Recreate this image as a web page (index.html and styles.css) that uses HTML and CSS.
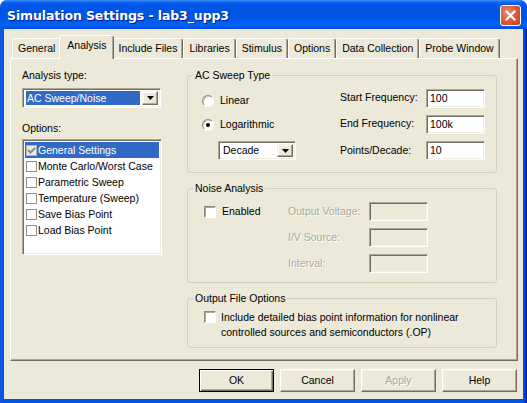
FILE: index.html
```html
<!DOCTYPE html>
<html>
<head>
<meta charset="utf-8">
<link rel="stylesheet" href="styles.css">
</head>
<body>
<div class="window">
  <div class="titlebar">
    <span class="title">Simulation Settings - lab3_upp3</span>
    <span class="close"><svg width="11" height="11" viewBox="0 0 11 11"><path d="M1.5 1.5 L9.5 9.5 M9.5 1.5 L1.5 9.5" stroke="#fff" stroke-width="2" stroke-linecap="square"/></svg></span>
  </div>
  <div class="client">
    <div class="tabs">
      <div class="tab">General</div>
      <div class="tab active">Analysis</div>
      <div class="tab">Include Files</div>
      <div class="tab">Libraries</div>
      <div class="tab">Stimulus</div>
      <div class="tab">Options</div>
      <div class="tab">Data Collection</div>
      <div class="tab">Probe Window</div>
    </div>
    <div class="panel">
      <div class="leftcol">
        <div class="lbl">Analysis type:</div>
        <div class="combo combo-wide">
          <span class="combo-text"><span class="hl">AC Sweep/Noise</span></span>
          <span class="dd"><svg width="7" height="4" viewBox="0 0 7 4"><path d="M0 0 H7 L3.5 4 Z" fill="#000"/></svg></span>
        </div>
        <div class="lbl opts">Options:</div>
        <div class="listbox">
          <div class="item selected"><span class="lcb lcb-dis"><svg width="9" height="9" viewBox="0 0 9 9"><path d="M1 4 L3.5 6.5 L8 2" stroke="#8d8d8d" stroke-width="2" fill="none"/></svg></span>General Settings</div>
          <div class="item"><span class="lcb"></span>Monte Carlo/Worst Case</div>
          <div class="item"><span class="lcb"></span>Parametric Sweep</div>
          <div class="item"><span class="lcb"></span>Temperature (Sweep)</div>
          <div class="item"><span class="lcb"></span>Save Bias Point</div>
          <div class="item"><span class="lcb"></span>Load Bias Point</div>
        </div>
      </div>
      <div class="rightcol">
        <fieldset class="group group-ac">
          <legend>AC Sweep Type</legend>
          <div class="acgrid">
            <div class="radio radio-first"><span class="rb"></span>Linear</div>
            <span class="flabel">Start Frequency:</span>
            <span class="tb">100</span>
            <div class="radio"><span class="rb rb-on"></span>Logarithmic</div>
            <span class="flabel">End Frequency:</span>
            <span class="tb">100k</span>
            <div class="combo combo-small">
              <span class="combo-text plain">Decade</span>
              <span class="dd"><svg width="7" height="4" viewBox="0 0 7 4"><path d="M0 0 H7 L3.5 4 Z" fill="#000"/></svg></span>
            </div>
            <span class="flabel">Points/Decade:</span>
            <span class="tb">10</span>
          </div>
        </fieldset>
        <fieldset class="group group-noise">
          <legend>Noise Analysis</legend>
          <div class="noisegrid">
            <div class="check"><span class="cb"></span>Enabled</div>
            <span class="flabel dis">Output Voltage:</span>
            <span class="tb tb-dis"></span>
            <span></span>
            <span class="flabel dis">I/V Source:</span>
            <span class="tb tb-dis"></span>
            <span></span>
            <span class="flabel dis">Interval:</span>
            <span class="tb tb-dis"></span>
          </div>
        </fieldset>
        <fieldset class="group group-out">
          <legend>Output File Options</legend>
          <div class="outrow">
            <span class="cb"></span>
            <span class="outtext">Include detailed bias point information for nonlinear<br>controlled sources and semiconductors (.OP)</span>
          </div>
        </fieldset>
      </div>
    </div>
    <div class="buttons">
      <div class="btn btn-default">OK</div>
      <div class="btn">Cancel</div>
      <div class="btn btn-dis">Apply</div>
      <div class="btn">Help</div>
    </div>
  </div>
</div>
</body>
</html>
```

FILE: styles.css
```css
html, body {
  margin: 0;
  padding: 0;
  background: #ffffff;
}
body {
  width: 527px;
  height: 403px;
  font-family: "Liberation Sans", Arial, sans-serif;
  font-size: 10.5px;
  line-height: 13px;
  color: #000;
  overflow: hidden;
}
.window {
  width: 527px;
  height: 403px;
  box-sizing: border-box;
  background: linear-gradient(to right, #0831d9 0, #166aee 1px, #0055e5 2px, #0055e5 523px, #0046d4 525px, #00138c 527px);
  border-radius: 7px 7px 0 0;
  display: flex;
  flex-direction: column;
  overflow: hidden;
}
.titlebar {
  height: 29px;
  flex: none;
  display: flex;
  align-items: center;
  justify-content: space-between;
  padding: 0 6px 0 7px;
  background: linear-gradient(to bottom, #3d8ff5 0, #1468f0 2px, #0058ee 4px, #0054e3 10px, #0055e6 18px, #0162f4 25px, #0058ec 27px, #0048d6 29px);
  border-radius: 7px 7px 0 0;
}
.title {
  color: #fff;
  font-family: "DejaVu Sans", "Liberation Sans", sans-serif;
  font-weight: bold;
  font-size: 12.5px;
  letter-spacing: -0.1px;
  text-shadow: 1px 1px #0a1e8c;
  padding-top: 1px;
}
.close {
  width: 19px;
  height: 19px;
  border: 1px solid #fff;
  border-radius: 3px;
  background: radial-gradient(circle at 35% 35%, #e98e76 0, #db5a3a 50%, #c3411f 100%);
  display: flex;
  align-items: center;
  justify-content: center;
  margin-top: 1px;
}
.client {
  flex: 1;
  margin: 0 4px 4px 4px;
  background: #ece9d8;
  padding: 6px 5px 0 6px;
  display: flex;
  flex-direction: column;
}
.tabs {
  height: 23px;
  display: flex;
  align-items: flex-end;
  padding-left: 2px;
  position: relative;
  z-index: 2;
}
.tab {
  height: 20px;
  box-sizing: border-box;
  padding: 3px 5px 0 5px;
  border-top: 1px solid #fff;
  border-left: 1px solid #fff;
  border-right: 1px solid #716f64;
  border-radius: 3px 3px 0 0;
  box-shadow: inset -1px 0 #aca899;
  white-space: nowrap;
}
.tab.active {
  height: 24px;
  margin: 0 -2px -1px -2px;
  padding: 3px 7px 0 7px;
  background: #ece9d8;
  position: relative;
  z-index: 3;
}
.panel {
  height: 303px;
  box-sizing: border-box;
  border: 1px solid;
  border-color: #fff #716f64 #716f64 #fff;
  box-shadow: inset -1px -1px #aca899;
  display: flex;
  padding: 10px 0 0 11px;
  position: relative;
  z-index: 1;
}
.leftcol {
  width: 139px;
  display: flex;
  flex-direction: column;
}
.lbl {
  height: 13px;
}
.lbl.opts {
  margin-top: 14px;
}
.combo {
  box-sizing: border-box;
  display: flex;
  background: #fff;
  border: 1px solid;
  border-color: #aca899 #fff #fff #aca899;
  box-shadow: inset 1px 1px #716f64, inset -1px -1px #f1efe2;
  padding: 2px;
}
.combo-wide {
  margin-top: 6px;
  height: 20px;
  width: 139px;
}
.combo-small {
  height: 19px;
  width: 78px;
  margin-left: 16px;
}
.combo-text {
  flex: 1;
  display: flex;
  align-items: center;
  padding-left: 1px;
}
.combo-text.plain {
  padding-left: 2px;
}
.hl {
  background: #316ac5;
  color: #fff;
  flex: 1;
  height: 100%;
  display: flex;
  align-items: center;
  padding-left: 1px;
  margin-right: 2px;
}
.dd {
  width: 16px;
  box-sizing: border-box;
  background: #ece9d8;
  border: 1px solid;
  border-color: #f1efe2 #716f64 #716f64 #f1efe2;
  box-shadow: inset -1px -1px #aca899, inset 1px 1px #fff;
  display: flex;
  align-items: center;
  justify-content: center;
}
.listbox {
  margin-top: 4px;
  height: 116px;
  width: 140px;
  box-sizing: border-box;
  background: #fff;
  border: 1px solid;
  border-color: #aca899 #fff #fff #aca899;
  box-shadow: inset 1px 1px #716f64, inset -1px -1px #f1efe2;
  padding: 2px;
}
.item {
  height: 16px;
  display: flex;
  align-items: center;
  white-space: nowrap;
  padding-left: 1px;
}
.item.selected {
  background: #316ac5;
  color: #fff;
}
.lcb {
  width: 11px;
  height: 11px;
  box-sizing: border-box;
  border: 1px solid #8e8f8f;
  background: #fff;
  margin-right: 1px;
  display: flex;
  align-items: center;
  justify-content: center;
}
.lcb-dis {
  background: #ece9d8;
  border-color: #b5b5b5;
}
.rightcol {
  margin-left: 26px;
  width: 310px;
  display: flex;
  flex-direction: column;
}
.group {
  margin: 0;
  padding: 0;
  min-width: 0;
  border: 1px solid #d0d0bf;
  border-radius: 3px;
}
.group legend {
  margin-left: 5px;
  padding: 0 2px;
  line-height: 13px;
  color: #000;
}
.group-ac {
  padding: 7px 0 12px 0;
}
.group-noise {
  margin-top: 9px;
  padding: 7px 0 9px 0;
}
.group-out {
  margin-top: 9px;
  padding: 5px 0 7px 0;
}
.acgrid {
  display: grid;
  grid-template-columns: 138px 86px 59px;
  grid-template-rows: 19px 19px 19px;
  row-gap: 7px;
  align-items: center;
  padding-left: 14px;
}
.acgrid .radio-first {
  margin-top: 4px;
}
.acgrid .radio + .flabel {
  margin-bottom: 2px;
}
.noisegrid {
  display: grid;
  grid-template-columns: 84px 81px 59px;
  grid-template-rows: 19px 19px 19px;
  row-gap: 7px;
  align-items: center;
  padding-left: 16px;
}
.radio, .check {
  display: flex;
  align-items: center;
  white-space: nowrap;
}
.rb {
  width: 12px;
  height: 12px;
  box-sizing: border-box;
  border-radius: 50%;
  border: 1px solid;
  border-color: #8b8b87 #fff #fff #8b8b87;
  background: #fff;
  box-shadow: inset 1px 1px #ccc9b8;
  margin-right: 6px;
  display: flex;
  align-items: center;
  justify-content: center;
}
.rb-on::after {
  content: "";
  width: 4px;
  height: 4px;
  border-radius: 50%;
  background: #000;
}
.cb {
  width: 12px;
  height: 12px;
  flex: none;
  box-sizing: border-box;
  border: 1px solid;
  border-color: #8b8b87 #fff #fff #8b8b87;
  box-shadow: inset 1px 1px #aca899;
  background: #fff;
  margin-right: 6px;
}
.flabel {
  white-space: nowrap;
}
.flabel.dis {
  color: #aca899;
  text-shadow: 1px 1px #fff;
}
.tb {
  height: 19px;
  box-sizing: border-box;
  background: #fff;
  border: 1px solid;
  border-color: #aca899 #fff #fff #aca899;
  box-shadow: inset 1px 1px #716f64, inset -1px -1px #f1efe2;
  padding: 2px 0 0 3px;
}
.tb-dis {
  background: #ece9d8;
}
.outrow {
  display: flex;
  align-items: flex-start;
  padding-left: 16px;
}
.outrow .cb {
  margin-top: 1px;
  margin-right: 5px;
}
.outtext {
  line-height: 15px;
}
.buttons {
  margin-top: 8px;
  display: flex;
  justify-content: flex-end;
  gap: 6px;
  padding-right: 1px;
}
.btn {
  width: 75px;
  height: 23px;
  box-sizing: border-box;
  border: 1px solid;
  border-color: #fff #716f64 #716f64 #fff;
  box-shadow: inset -1px -1px #aca899, inset 1px 1px #f1efe2;
  display: flex;
  align-items: center;
  justify-content: center;
}
.btn-default {
  border: 1px solid #000;
  box-shadow: inset 1px 1px #fff, inset -1px -1px #716f64, inset -2px -2px #aca899;
}
.btn-dis {
  color: #aca899;
  text-shadow: 1px 1px #fff;
}
```
